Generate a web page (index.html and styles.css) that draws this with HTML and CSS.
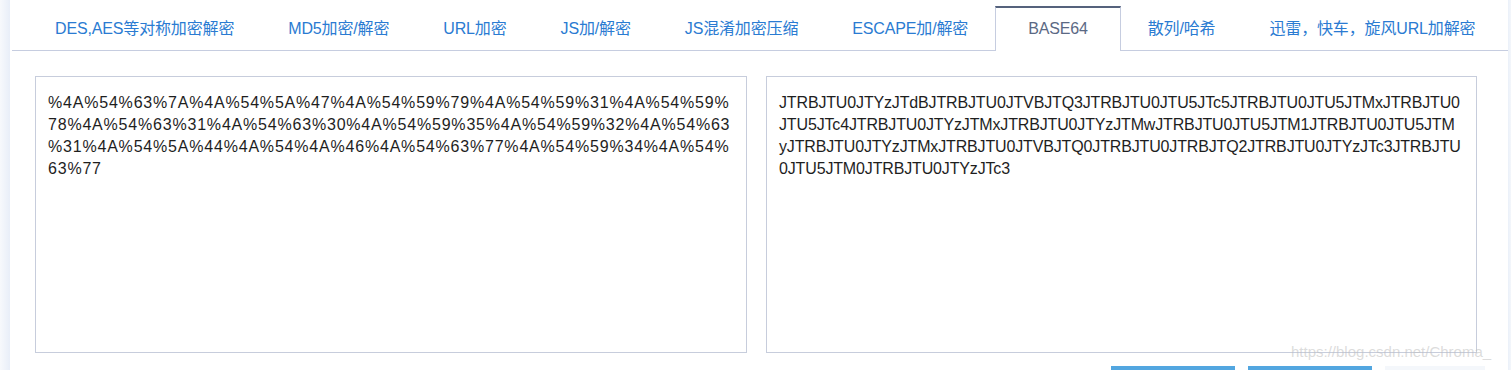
FILE: index.html
```html
<!DOCTYPE html>
<html lang="zh-CN">
<head>
<meta charset="utf-8">
<title>BASE64</title>
<link rel="stylesheet" href="styles.css">
</head>
<body>
<div class="page">
  <div class="side side-l"></div>
  <main class="panel">
    <ul class="tabs">
      <li class="tab">DES,AES等对称加密解密</li>
      <li class="tab">MD5加密/解密</li>
      <li class="tab">URL加密</li>
      <li class="tab">JS加/解密</li>
      <li class="tab">JS混淆加密压缩</li>
      <li class="tab">ESCAPE加/解密</li>
      <li class="tab active">BASE64</li>
      <li class="tab">散列/哈希</li>
      <li class="tab">迅雷，快车，旋风URL加解密</li>
    </ul>
    <div class="editors">
      <div class="box box-left">
        <div class="ln">%4A%54%63%7A%4A%54%5A%47%4A%54%59%79%4A%54%59%31%4A%54%59%</div>
        <div class="ln">78%4A%54%63%31%4A%54%63%30%4A%54%59%35%4A%54%59%32%4A%54%63</div>
        <div class="ln">%31%4A%54%5A%44%4A%54%4A%46%4A%54%63%77%4A%54%59%34%4A%54%</div>
        <div class="ln">63%77</div>
      </div>
      <div class="box box-right">
        <div class="ln">JTRBJTU0JTYzJTdBJTRBJTU0JTVBJTQ3JTRBJTU0JTU5JTc5JTRBJTU0JTU5JTMxJTRBJTU0</div>
        <div class="ln">JTU5JTc4JTRBJTU0JTYzJTMxJTRBJTU0JTYzJTMwJTRBJTU0JTU5JTM1JTRBJTU0JTU5JTM</div>
        <div class="ln">yJTRBJTU0JTYzJTMxJTRBJTU0JTVBJTQ0JTRBJTU0JTRBJTQ2JTRBJTU0JTYzJTc3JTRBJTU</div>
        <div class="ln">0JTU5JTM0JTRBJTU0JTYzJTc3</div>
      </div>
    </div>
    <div class="actions">
      <button class="btn btn-primary" type="button"></button>
      <button class="btn btn-primary" type="button"></button>
      <button class="btn btn-light" type="button"></button>
    </div>
  </main>
  <div class="side side-r"></div>
  <div class="watermark">https://blog.csdn.net/Chroma_</div>
</div>
</body>
</html>
```

FILE: styles.css
```css
html, body {
  margin: 0;
  padding: 0;
  background: #ffffff;
}

body {
  width: 1511px;
  height: 370px;
  overflow: hidden;
  font-family: "Liberation Sans", "Noto Sans CJK SC", sans-serif;
}

.page {
  position: relative;
  display: flex;
  height: 370px;
  overflow: hidden;
}

.side {
  flex: none;
  height: 100%;
}

.side-l {
  width: 10px;
  background: linear-gradient(to right, #f7f9fc, #e8eef8);
}

.side-r {
  width: 3px;
  background: linear-gradient(to right, #eaf0f9, #f4f7fb);
}

.panel {
  flex: 1;
  min-width: 0;
  background: #ffffff;
  padding-left: 2px;
}

.tabs {
  list-style: none;
  margin: 6px 0 0 0;
  padding: 0 0 0 16px;
  display: flex;
  height: 44px;
  border-bottom: 1px solid #c6cde0;
}

.tab {
  box-sizing: border-box;
  height: 45px;
  padding: 0 26px;
  border: 1px solid transparent;
  border-top: 2px solid transparent;
  border-bottom: none;
  font-size: 16px;
  line-height: 41px;
  letter-spacing: -0.15px;
  color: #2a7bd2;
  white-space: nowrap;
  background: transparent;
}

.tab.active {
  padding: 0 32px;
  color: #5b6984;
  background: #ffffff;
  border-color: #c6cde0;
  border-top-color: #55627c;
}

.editors {
  display: flex;
  gap: 19px;
  margin: 25px 0 0 23px;
}

.box {
  box-sizing: border-box;
  height: 277px;
  border: 1px solid #c7cddc;
  padding: 15px 12px 0 12px;
  font-size: 16px;
  line-height: 22px;
  color: #1e1e1e;
  background: #ffffff;
}

.box-left {
  width: 712px;
  letter-spacing: 0.8px;
}

.box-right {
  width: 711px;
  letter-spacing: -0.15px;
}

.ln {
  white-space: nowrap;
}

.actions {
  display: flex;
  justify-content: flex-end;
  gap: 13px;
  margin-top: 13px;
  padding-right: 23px;
}

.btn {
  height: 34px;
  border: none;
  padding: 0;
  border-radius: 0;
}

.btn-primary {
  width: 124px;
  background: #52a6e0;
}

.btn-light {
  width: 100px;
  background: #f4f7fb;
}

.watermark {
  position: absolute;
  left: 1291px;
  top: 342px;
  font-size: 15px;
  line-height: 20px;
  color: rgba(190, 190, 190, 0.55);
  white-space: nowrap;
}
```
